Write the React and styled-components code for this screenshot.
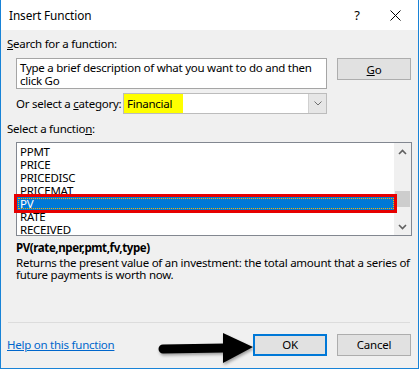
import React from 'react';
import styled, { createGlobalStyle } from 'styled-components';

const GlobalStyle = createGlobalStyle`
  body {
    margin: 0;
    background: #fff;
    font-family: 'Noto Sans', 'Open Sans', sans-serif;
    font-size: 11.5px;
    letter-spacing: -0.25px;
    color: #000;
  }
`;

const Window = styled.div`
  position: relative;
  width: 419px;
  height: 369px;
  box-sizing: border-box;
  background: #f0f0f0;
  border: 1px solid #1883d7;
  border-top: none;
  display: flex;
  flex-direction: column;
  overflow: hidden;
`;

const TitleBar = styled.div`
  height: 30px;
  background: #fff;
  display: flex;
  align-items: center;
  padding-left: 8px;
  flex-shrink: 0;
`;

const Title = styled.div`
  flex: 1;
  font-size: 11.8px;
  letter-spacing: -0.1px;
`;

const TitleButton = styled.div`
  width: ${props => props.w}px;
  height: 30px;
  display: flex;
  align-items: center;
  justify-content: center;
  font-size: 13px;
`;

const Body = styled.div`
  flex: 1;
  padding: 6px 6px 0 6px;
  display: flex;
  flex-direction: column;
`;

const Label = styled.div`
  height: 16px;
  line-height: 16px;
  margin-top: ${props => props.top || 0}px;
`;

const U = styled.span`
  text-decoration: underline;
`;

const SearchRow = styled.div`
  display: flex;
  align-items: flex-start;
  gap: 10px;
  margin-top: 6px;
  padding-left: 9px;
`;

const SearchBox = styled.div`
  width: 311px;
  height: 31px;
  box-sizing: border-box;
  background: #fff;
  border: 1px solid #a5a5a5;
  padding: 2px 3px;
  line-height: 13px;
`;

const Button = styled.div`
  width: 74px;
  height: 22px;
  box-sizing: border-box;
  background: #e1e1e1;
  border: ${props => (props.primary ? '2px solid #0078d7' : '1px solid #adadad')};
  display: flex;
  align-items: center;
  justify-content: center;
`;

const CategoryRow = styled.div`
  display: flex;
  align-items: center;
  margin-top: 4px;
  padding-left: 9px;
`;

const CategoryLabel = styled.span`
  width: 107px;
  white-space: nowrap;
  flex-shrink: 0;
`;

const Select = styled.div`
  width: 204px;
  height: 21px;
  flex-shrink: 0;
  box-sizing: border-box;
  background: #fff;
  border: 1px solid #bcbcbc;
  display: flex;
  align-items: stretch;
`;

const SelectValue = styled.div`
  flex: 1;
  display: flex;
  align-items: center;
`;

const Highlight = styled.span`
  background: #ffff00;
  width: 59px;
  height: 19px;
  line-height: 19px;
  padding-left: 3px;
  box-sizing: border-box;
`;

const SelectArrow = styled.div`
  width: 17px;
  background: #e6e6e6;
  border-left: 1px solid #d0d0d0;
  display: flex;
  align-items: center;
  justify-content: center;
`;

const ListBox = styled.div`
  margin: 5px 0 0 9px;
  width: 396px;
  height: 94px;
  box-sizing: border-box;
  border: 1px solid #828790;
  background: #fff;
  display: flex;
`;

const ListItems = styled.div`
  flex: 1;
  padding-top: 2px;
`;

const Row = styled.div`
  height: 13px;
  line-height: 13px;
  padding-left: 3px;
  position: relative;
  color: ${props => (props.selected ? '#fff' : '#000')};
  background: ${props => (props.selected ? '#0078d7' : 'transparent')};
  outline: ${props => (props.selected ? '3px solid #e60000' : 'none')};
  z-index: ${props => (props.selected ? 1 : 0)};
  &::after {
    content: '';
    display: ${props => (props.selected ? 'block' : 'none')};
    position: absolute;
    inset: 1px 0 1px 1px;
    border: 1px dotted #f4b400;
  }
`;

const ScrollBar = styled.div`
  width: 17px;
  background: #f0f0f0;
  display: flex;
  flex-direction: column;
  align-items: center;
`;

const ScrollArrow = styled.div`
  height: 17px;
  width: 17px;
  display: flex;
  align-items: center;
  justify-content: center;
`;

const Track = styled.div`
  flex: 1;
  width: 15px;
  position: relative;
`;

const Thumb = styled.div`
  position: absolute;
  left: 0;
  top: 31px;
  width: 15px;
  height: 16px;
  background: #cdcdcd;
`;

const Signature = styled.div`
  margin: 4px 0 0 9px;
  font-weight: bold;
  height: 16px;
  line-height: 16px;
  letter-spacing: -0.4px;
`;

const Description = styled.div`
  margin: 1px 0 0 9px;
  line-height: 12px;
`;

const Separator = styled.div`
  margin: auto 2px 0 1px;
  height: 1px;
  background: #dcdcdc;
`;

const Footer = styled.div`
  height: 43px;
  display: flex;
  align-items: center;
  gap: 10px;
  padding-bottom: 2px;
  padding-right: 1px;
`;

const HelpLink = styled.a`
  flex: 1;
  color: #0066cc;
  text-decoration: underline;
`;

const Pointer = styled.svg`
  position: absolute;
  left: 152px;
  top: 328px;
`;

const Chevron = ({ up }) => (
  <svg width="9" height="6" viewBox="0 0 9 6">
    <path
      d={up ? 'M1 5 L4.5 1.5 L8 5' : 'M1 1 L4.5 4.5 L8 1'}
      fill="none"
      stroke="#606060"
      strokeWidth="1.6"
    />
  </svg>
);

const items = ['PPMT', 'PRICE', 'PRICEDISC', 'PRICEMAT', 'PV', 'RATE', 'RECEIVED'];

export default function App() {
  return (
    <>
      <GlobalStyle />
      <Window>
        <TitleBar>
          <Title>Insert Function</Title>
          <TitleButton w={30}>?</TitleButton>
          <TitleButton w={46}>
            <svg width="11" height="11" viewBox="0 0 11 11">
              <path d="M0.5 0.5 L10.5 10.5 M10.5 0.5 L0.5 10.5" stroke="#000" strokeWidth="1" />
            </svg>
          </TitleButton>
        </TitleBar>
        <Body>
          <Label>
            <U>S</U>earch for a function:
          </Label>
          <SearchRow>
            <SearchBox>
              Type a brief description of what you want to do and then click Go
            </SearchBox>
            <Button>
              <U>G</U>o
            </Button>
          </SearchRow>
          <CategoryRow>
            <CategoryLabel>
              Or select a <U>c</U>ategory:
            </CategoryLabel>
            <Select>
              <SelectValue>
                <Highlight>Financial</Highlight>
              </SelectValue>
              <SelectArrow>
                <svg width="8" height="5" viewBox="0 0 8 5">
                  <path d="M0.5 0.5 L4 4 L7.5 0.5" fill="none" stroke="#707070" strokeWidth="1" />
                </svg>
              </SelectArrow>
            </Select>
          </CategoryRow>
          <Label top={7}>
            Select a functio<U>n</U>:
          </Label>
          <ListBox>
            <ListItems>
              {items.map(name => (
                <Row key={name} selected={name === 'PV'}>
                  {name}
                </Row>
              ))}
            </ListItems>
            <ScrollBar>
              <ScrollArrow>
                <Chevron up />
              </ScrollArrow>
              <Track>
                <Thumb />
              </Track>
              <ScrollArrow>
                <Chevron />
              </ScrollArrow>
            </ScrollBar>
          </ListBox>
          <Signature>PV(rate,nper,pmt,fv,type)</Signature>
          <Description>
            Returns the present value of an investment: the total amount that a series of
            <br />
            future payments is worth now.
          </Description>
          <Separator />
          <Footer>
            <HelpLink>Help on this function</HelpLink>
            <Button primary>OK</Button>
            <Button>Cancel</Button>
          </Footer>
        </Body>
        <Pointer width="104" height="40" viewBox="0 0 104 40">
          <defs>
            <filter id="sh" x="-10%" y="-20%" width="130%" height="160%">
              <feDropShadow dx="1" dy="2" stdDeviation="1.5" floodColor="#000" floodOpacity="0.35" />
            </filter>
          </defs>
          <g filter="url(#sh)">
            <line x1="10" y1="21" x2="72" y2="20" stroke="#000" strokeWidth="9" strokeLinecap="round" />
            <path d="M70 5 L100 19 L70 35 Z" fill="#000" />
          </g>
        </Pointer>
      </Window>
    </>
  );
}
